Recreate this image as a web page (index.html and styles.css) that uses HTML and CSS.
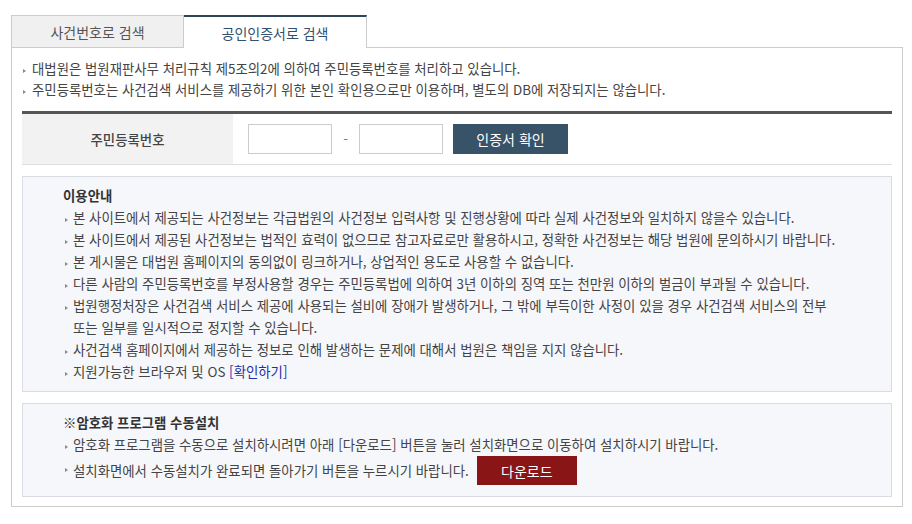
FILE: index.html
```html
<!DOCTYPE html>
<html lang="ko">
<head>
<meta charset="utf-8">
<title>공인인증서로 검색</title>
<link rel="stylesheet" href="styles.css">
</head>
<body>
<div class="wrap">
  <div class="tabs">
    <div class="tab">사건번호로 검색</div>
    <div class="tab active">공인인증서로 검색</div>
  </div>
  <div class="panel">
    <ul class="notice">
      <li>대법원은 법원재판사무 처리규칙 제5조의2에 의하여 주민등록번호를 처리하고 있습니다.</li>
      <li>주민등록번호는 사건검색 서비스를 제공하기 위한 본인 확인용으로만 이용하며, 별도의 DB에 저장되지는 않습니다.</li>
    </ul>
    <div class="form-row">
      <div class="label">주민등록번호</div>
      <div class="field">
        <input class="ssn" type="text">
        <span class="dash">-</span>
        <input class="ssn" type="password">
        <button class="btn-cert" type="button">인증서 확인</button>
      </div>
    </div>
    <div class="infobox">
      <div class="box-title">이용안내</div>
      <ul class="box-list">
        <li>본 사이트에서 제공되는 사건정보는 각급법원의 사건정보 입력사항 및 진행상황에 따라 실제 사건정보와 일치하지 않을수 있습니다.</li>
        <li>본 사이트에서 제공된 사건정보는 법적인 효력이 없으므로 참고자료로만 활용하시고, 정확한 사건정보는 해당 법원에 문의하시기 바랍니다.</li>
        <li>본 게시물은 대법원 홈페이지의 동의없이 링크하거나, 상업적인 용도로 사용할 수 없습니다.</li>
        <li>다른 사람의 주민등록번호를 부정사용할 경우는 주민등록법에 의하여 3년 이하의 징역 또는 천만원 이하의 벌금이 부과될 수 있습니다.</li>
        <li>법원행정처장은 사건검색 서비스 제공에 사용되는 설비에 장애가 발생하거나, 그 밖에 부득이한 사정이 있을 경우 사건검색 서비스의 전부<br>또는 일부를 일시적으로 정지할 수 있습니다.</li>
        <li>사건검색 홈페이지에서 제공하는 정보로 인해 발생하는 문제에 대해서 법원은 책임을 지지 않습니다.</li>
        <li>지원가능한 브라우저 및 OS <a class="link" href="#">[확인하기]</a></li>
      </ul>
    </div>
    <div class="infobox infobox-last">
      <div class="box-title">※암호화 프로그램 수동설치</div>
      <ul class="box-list">
        <li>암호화 프로그램을 수동으로 설치하시려면 아래 [다운로드] 버튼을 눌러 설치화면으로 이동하여 설치하시기 바랍니다.</li>
        <li class="with-btn">설치화면에서 수동설치가 완료되면 돌아가기 버튼을 누르시기 바랍니다. <button class="btn-down" type="button">다운로드</button></li>
      </ul>
    </div>
  </div>
</div>
</body>
</html>
```

FILE: styles.css
```css
* { box-sizing: border-box; }
body {
  margin: 0;
  font-family: "Noto Sans CJK KR", "Noto Sans", sans-serif;
  font-size: 13.4px;
  color: #444;
  background: #fff;
}
.wrap {
  padding: 15px 0 0 11px;
  width: 903px;
}
.tabs {
  display: flex;
  height: 32px;
}
.tab {
  width: 173px;
  height: 32px;
  border: 1px solid #ccc;
  border-bottom: 0;
  background: #f0f0f0;
  display: flex;
  align-items: center;
  justify-content: center;
  font-size: 14px;
  color: #555;
}
.tab.active {
  width: 183px;
  height: 33px;
  border-left: 0;
  border-top: 2px solid #2e4458;
  background: #fff;
  color: #33506e;
  position: relative;
  z-index: 1;
}
.panel {
  width: 892px;
  border: 1px solid #ccc;
  padding: 10px 10px 9px;
}
ul { list-style: none; margin: 0; padding: 0; }
.notice li {
  position: relative;
  line-height: 21px;
  padding-left: 10px;
}
.notice li::before,
.box-list li::before {
  content: "";
  position: absolute;
  left: 1px;
  top: 11px;
  border-left: 3px solid #8a8a8a;
  border-top: 2.5px solid transparent;
  border-bottom: 2.5px solid transparent;
}
.form-row {
  margin-top: 11px;
  display: flex;
  height: 54px;
  border-top: 3px solid #555;
  border-bottom: 1px solid #ddd;
}
.label {
  width: 211px;
  background: #f2f2f2;
  display: flex;
  align-items: center;
  justify-content: center;
  color: #444;
  font-weight: 500;
}
.field {
  display: flex;
  align-items: center;
  padding-left: 15px;
}
.ssn {
  width: 84px;
  height: 30px;
  border: 1px solid #ccc;
  margin: 0;
  padding: 0 4px;
  font: inherit;
}
.dash {
  width: 27px;
  text-align: center;
  color: #777;
}
.btn-cert {
  margin: 0 0 0 10px;
  width: 115px;
  height: 30px;
  border: 0;
  background: #385267;
  color: #fff;
  font: inherit;
  font-size: 14px;
  padding: 0;
}
.infobox {
  margin-top: 11px;
  border: 1px solid #d9dde3;
  background: #f6f7fb;
  padding: 7px 10px 9px 40px;
}
.infobox-last {
  padding-bottom: 11px;
}
.box-title {
  line-height: 22px;
  font-weight: bold;
  color: #333;
}
.box-list li {
  position: relative;
  line-height: 22px;
  padding-left: 10px;
}
.box-list li::before {
  left: 2px;
  top: 12px;
}
.link {
  color: #1b2fa6;
  text-decoration: none;
}
.box-list li.with-btn {
  display: flex;
  align-items: center;
  height: 30px;
}
.box-list li.with-btn::before {
  top: 13px;
}
.btn-down {
  margin: 1px 0 0 8px;
  width: 100px;
  height: 29px;
  border: 0;
  background: #8a1517;
  color: #fff;
  font: inherit;
  font-size: 14px;
  padding: 0;
}
```
